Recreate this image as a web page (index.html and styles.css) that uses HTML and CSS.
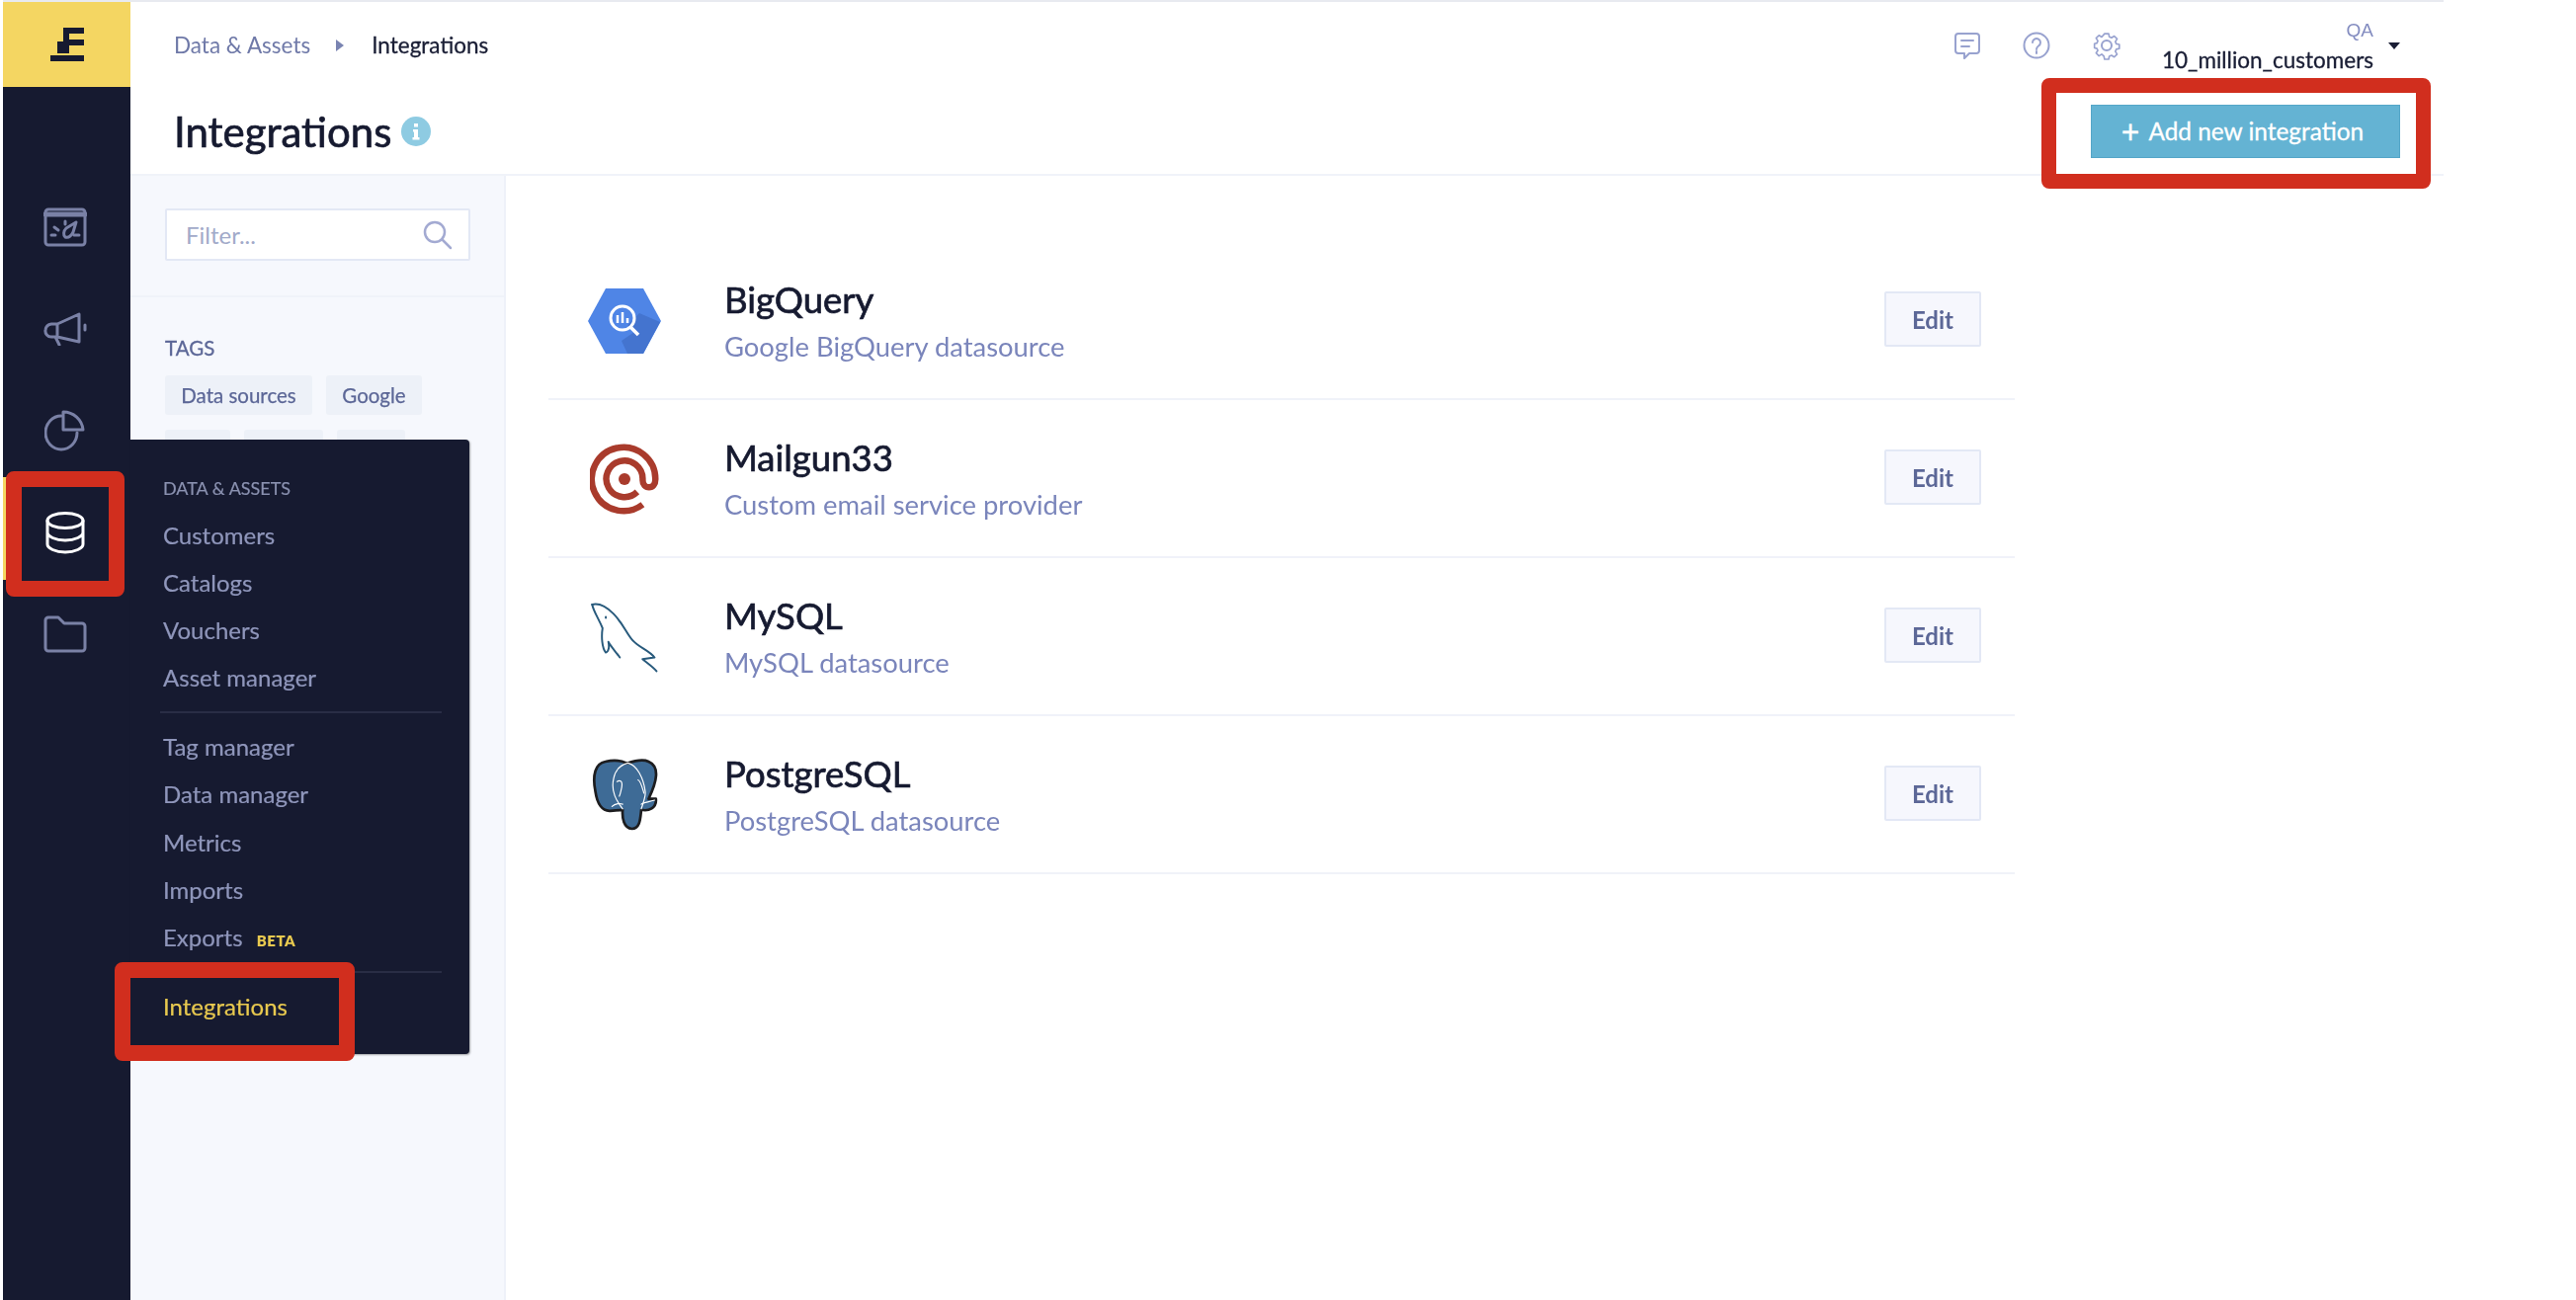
FILE: index.html
```html
<!DOCTYPE html>
<html lang="en">
<head>
<meta charset="utf-8">
<title>Integrations</title>
<link rel="stylesheet" href="styles.css">
</head>
<body>
<div class="shot">
<div class="app">
  <aside class="rail">
    <div class="logo">
      <svg width="34" height="34" viewBox="0 0 34 34"><path class="logo-mark" d="M13 0h21v6H19v6h15v6H19v8h-6v-8H7v8h6zM0 28h34v6H0z" fill-rule="evenodd"/><path class="logo-mark" d="M7 14h6v12H7z"/></svg>
    </div>
    <nav class="rail-nav">
      <a class="rail-item">
        <svg width="44" height="40" viewBox="0 0 44 40" class="ico"><rect x="2" y="2" width="40" height="36" rx="3"/><path d="M2 7h40" stroke-width="5"/><path d="M8 28h4M31 28h5M11 20l4 3M22 14v3M33 15L23 21c-3 3-3 7-1 9 3 1 6-1 8-5z"/></svg>
      </a>
      <a class="rail-item">
        <svg width="44" height="34" viewBox="0 0 44 34" class="ico"><path d="M36 2v28L14 25H8a6 6 0 0 1-6-7 7 7 0 0 1 6-6h6zM14 12v13M12 25l4 8M42 13v5"/></svg>
      </a>
      <a class="rail-item">
        <svg width="42" height="42" viewBox="0 0 42 42" class="ico"><path d="M17 6A16 17 0 1 0 33 23"/><path d="M19 2V20H39A20 20 0 0 0 19 2Z"/></svg>
      </a>
      <a class="rail-item is-active">
        <svg width="42" height="44" viewBox="0 0 42 44" class="ico"><ellipse cx="21" cy="10" rx="18" ry="7.500"/><path d="M3 10v24c0 4 8 8 18 8s18-4 18-8V10M3 22c0 4 8 8 18 8s18-4 18-8"/></svg>
      </a>
      <a class="rail-item">
        <svg width="44" height="38" viewBox="0 0 44 38" class="ico"><path d="M2 5a3 3 0 0 1 3-3h10l6 6h18a3 3 0 0 1 3 3v22a3 3 0 0 1-3 3H5a3 3 0 0 1-3-3z"/></svg>
      </a>
    </nav>
  </aside>

  <main class="main">
    <header class="header">
      <div class="topbar">
        <div class="crumbs">
          <span class="crumb">Data &amp; Assets</span>
          <svg class="crumb-arrow" width="8" height="12" viewBox="0 0 8 12"><path d="M0 0l8 6-8 6z"/></svg>
          <span class="crumb-current">Integrations</span>
        </div>
        <div class="tools">
          <svg class="tool" width="28" height="28" viewBox="0 0 28 28"><path d="M5 2h18a3 3 0 0 1 3 3v14a3 3 0 0 1-3 3h-7l-5 5v-5H5a3 3 0 0 1-3-3V5a3 3 0 0 1 3-3zM8 9h12M8 15h8"/></svg>
          <svg class="tool" width="28" height="28" viewBox="0 0 28 28"><circle cx="14" cy="14" r="12.500"/><path d="M10 11a4 4 0 1 1 6 3.500c-1.500 1-2 1.500-2 3.500M14 20v2"/></svg>
          <svg class="tool" width="30" height="30" viewBox="0 0 30 30"><path d="M12.500 2h5l.8 3.800 2.700 1.100 3.300-2.100 3.500 3.500-2.100 3.300 1.100 2.700 3.700.8v5l-3.700.8-1.100 2.700 2.100 3.300-3.500 3.500-3.300-2.100-2.700 1.100-.8 3.700h-5l-.8-3.700L9 27l-3.300 2.100-3.500-3.500 2.100-3.300L3.200 20l-3-.8v-5l3-.8 1.100-2.700-2.100-3.300 3.500-3.500L9 6z" transform="translate(2.500 1.500) scale(.83)"/><circle cx="15" cy="15" r="5"/></svg>
          <div class="account">
            <span class="account-org">QA</span>
            <span class="account-name">10_million_customers</span>
          </div>
          <svg class="caret" width="12" height="7" viewBox="0 0 12 7"><path d="M0 0h12L6 7z"/></svg>
        </div>
      </div>
      <div class="titlebar">
        <div class="title-group">
          <h1 class="title">Integrations</h1>
          <svg class="info" width="30" height="30" viewBox="0 0 30 30"><circle cx="15" cy="15" r="15" fill="#8ecbe2"/><path d="M13 7h4v3.500h-4zM12 13h5v8h1.500v2.500h-7V21H13v-5.500h-1z" fill="#fff"/></svg>
        </div>
        <button class="btn-add"><span class="plus">+</span>Add new integration</button>
      </div>
    </header>

    <div class="body">
      <section class="panel">
        <div class="filter-wrap">
          <div class="filter">
            <span class="filter-text">Filter...</span>
            <svg class="search" width="30" height="30" viewBox="0 0 30 30"><circle cx="12" cy="12" r="10"/><path d="M19.500 19.500L28 28"/></svg>
          </div>
        </div>
        <div class="tags">
          <div class="tags-label">TAGS</div>
          <div class="tag-list">
            <span class="tag tag-a">Data sources</span>
            <span class="tag tag-b">Google</span>
            <span class="tag tag-c"></span>
            <span class="tag tag-d"></span>
            <span class="tag tag-e"></span>
          </div>
        </div>
      </section>

      <section class="list">
        <article class="row">
          <div class="logo-slot">
          <svg width="76" height="68" viewBox="0 0 76 68">
            <path d="M19 1h38l18 33-18 33H19L1 34z" fill="#4f85e6"/>
            <path d="M48 45l-7-7 12-12 21 9-17 32H41l-6-13z" fill="#4474cf"/>
            <circle cx="36" cy="31" r="12" fill="none" stroke="#fff" stroke-width="3"/>
            <path d="M44 40l8 8" stroke="#fff" stroke-width="3.500"/>
            <path d="M31 28v8M36 25v11M41 31v5" stroke="#fff" stroke-width="2.500"/>
          </svg>
          </div>
          <div class="row-text">
            <div class="row-name">BigQuery</div>
            <div class="row-desc">Google BigQuery datasource</div>
          </div>
          <button class="btn-edit">Edit</button>
        </article>
        <article class="row">
          <div class="logo-slot">
          <svg width="70" height="72" viewBox="0 0 76 78">
            <path d="M58 67a35 35 0 1 1 14-28c0 6-3 9-7 9s-7-3-7-8V39a20 20 0 1 0-6 14" fill="none" stroke="#a93b2c" stroke-width="7"/>
            <circle cx="38" cy="39" r="6.500" fill="#a93b2c"/>
          </svg>
          </div>
          <div class="row-text">
            <div class="row-name">Mailgun33</div>
            <div class="row-desc">Custom email service provider</div>
          </div>
          <button class="btn-edit">Edit</button>
        </article>
        <article class="row">
          <div class="logo-slot">
          <svg width="74" height="74" viewBox="122 105 215 225">
            <g fill="none" stroke="#285a7c" stroke-width="6" stroke-linejoin="round" stroke-linecap="round">
              <path d="M130 117C150 112 175 125 195 145C225 175 235 205 255 228C275 250 305 258 322 280L285 285C300 298 318 310 328 322"/>
              <path d="M130 117C135 140 150 160 162 190C158 215 160 250 172 265C182 262 183 245 180 232C190 250 205 265 215 280"/>
              <path d="M172 155v3"/>
            </g>
          </svg>
          </div>
          <div class="row-text">
            <div class="row-name">MySQL</div>
            <div class="row-desc">MySQL datasource</div>
          </div>
          <button class="btn-edit">Edit</button>
        </article>
        <article class="row">
          <div class="logo-slot logo-slot-pg">
          <svg width="70" height="74" viewBox="125 588 205 220">
            <path d="M170 600C140 605 130 640 140 690C145 725 160 750 185 748L222 745C220 770 225 800 250 802C275 802 275 770 278 745C300 750 325 740 322 712L300 712C325 660 335 615 300 600C280 590 250 600 235 605C215 595 190 595 170 600Z" fill="#3e6b96" stroke="#1d1d1f" stroke-width="8" stroke-linejoin="round"/>
            <g fill="none" stroke="#fff" stroke-width="3.500" stroke-linecap="round">
              <path d="M222 742C205 720 185 690 195 650C200 625 215 610 238 604C265 610 285 650 290 690C292 705 285 720 278 742"/>
              <path d="M190 735C200 725 215 725 222 728M278 728C285 722 300 722 318 716"/>
              <path d="M205 660c10-6 15 0 15 8s-5 30-8 36M268 655c8 2 12 20 18 40"/>
            </g>
          </svg>
          </div>
          <div class="row-text">
            <div class="row-name">PostgreSQL</div>
            <div class="row-desc">PostgreSQL datasource</div>
          </div>
          <button class="btn-edit">Edit</button>
        </article>
      </section>
    </div>
  </main>

  <div class="flyout">
    <div class="fly-head">DATA &amp; ASSETS</div>
    <a class="fly-item">Customers</a>
    <a class="fly-item">Catalogs</a>
    <a class="fly-item">Vouchers</a>
    <a class="fly-item">Asset manager</a>
    <hr class="fly-sep">
    <a class="fly-item">Tag manager</a>
    <a class="fly-item">Data manager</a>
    <a class="fly-item">Metrics</a>
    <a class="fly-item">Imports</a>
    <a class="fly-item">Exports <span class="beta">BETA</span></a>
    <hr class="fly-sep">
    <a class="fly-item fly-current">Integrations</a>
  </div>
</div>

<div class="mark mark-add"></div>
<div class="mark mark-db"></div>
<div class="mark mark-int"></div>
</div>
</body>
</html>
```

FILE: styles.css
```css
* { box-sizing: border-box; }
html, body { margin: 0; padding: 0; background: #fff; }
body { font-family: Lato, "Open Sans", sans-serif; height: 1316px; overflow: hidden; }
.shot { position: relative; height: 1316px; filter: blur(.6px); }

.app { position: relative; display: flex; width: 2470px; height: 1316px; margin-left: 3px; border-top: 2px solid #e8eaf0; }

/* rail */
.rail { width: 129px; flex: none; background: #161a30; }
.logo { height: 86px; background: #f4d662; display: flex; align-items: center; justify-content: center; }
.logo-mark { fill: #161a30; }
.rail-nav { padding-top: 90px; display: flex; flex-direction: column; }
.rail-item { position: relative; height: 103px; display: flex; align-items: center; justify-content: center; padding-right: 3px; }
.ico { fill: none; stroke: #7a81a6; stroke-width: 3; stroke-linecap: round; stroke-linejoin: round; }
.is-active .ico { stroke: #fff; }
.is-active::before { content: ""; position: absolute; left: 0; top: -4px; width: 4px; height: 104px; background: #f4d662; }

/* header */
.main { flex: 1; min-width: 0; display: flex; flex-direction: column; }
.header { height: 176px; border-bottom: 2px solid #f0f3f9; display: flex; flex-direction: column; }
.topbar { height: 88px; display: flex; align-items: center; justify-content: space-between; padding: 0 44px 0 44px; }
.crumbs { display: flex; align-items: center; font-size: 22.500px; margin-top: -1px; }
.crumb { color: #6f79a8; }
.crumb-arrow { margin: 0 28px 0 26px; fill: #7a84b2; }
.crumb-current { color: #1a1e35; -webkit-text-stroke: .3px #1a1e35; }
.tools { display: flex; align-items: center; }
.tool { fill: none; stroke: #98a2cf; stroke-width: 2; stroke-linecap: round; stroke-linejoin: round; margin-right: 42px; }
.tool + .tool + .tool { margin-right: 41px; }
.account { display: flex; flex-direction: column; align-items: flex-end; margin-top: 4px; }
.account-org { font-size: 19px; line-height: 22px; color: #838cc0; margin-bottom: 4px; font-family: "Liberation Sans", sans-serif; }
.account-name { font-size: 22.500px; line-height: 30px; color: #1a1e35; -webkit-text-stroke: .3px #1a1e35; }
.caret { fill: #1a1e35; margin: 0 0 0 15px; }

.titlebar { flex: 1; display: flex; align-items: center; justify-content: space-between; padding: 0 44px 0 44px; }
.title-group { display: flex; align-items: center; }
.title { margin: 0; font-size: 42px; font-weight: 400; color: #161a30; line-height: 50px; -webkit-text-stroke: .7px #161a30; }
.info { margin-left: 10px; }
.btn-add { width: 313px; height: 54px; margin-top: -1px; border: 1px solid #55a6c8; background: #64b3d3; color: #fff; font: 400 24.400px Lato, sans-serif; -webkit-text-stroke: .3px #fff; display: flex; align-items: center; justify-content: center; padding: 0 6px 0 0; }
.plus { font-size: 32px; line-height: 1; margin-right: 9px; }

/* body */
.body { flex: 1; display: flex; min-height: 0; }
.panel { width: 380px; flex: none; background: #f6f8fd; border-right: 2px solid #eef1f9; }
.filter-wrap { height: 123px; padding: 33px 34px 0 35px; border-bottom: 2px solid #f0f3f9; }
.filter { height: 53px; background: #fff; border: 2px solid #e3e8f5; display: flex; align-items: center; justify-content: space-between; padding: 0 16px 0 19px; border-radius: 2px; }
.filter-text { font-size: 24px; color: #a2aac9; }
.search { fill: none; stroke: #a3aad2; stroke-width: 2.500; stroke-linecap: round; }
.tags { padding: 40px 33px 0 35px; }
.tags-label { font-size: 20.500px; line-height: 22px; color: #5c6797; -webkit-text-stroke: .3px #5c6797; margin-bottom: 17px; }
.tag-list { display: flex; flex-wrap: wrap; gap: 15px 14px; }
.tag { height: 40px; padding: 0 16px; background: #edf1f8; color: #5c6797; font-size: 20.500px; line-height: 40px; border-radius: 3px; -webkit-text-stroke: .25px #5c6797; }
.tag-a { width: 149px; padding: 0; text-align: center; }
.tag-b { width: 97px; padding: 0; text-align: center; }
.tag-c { width: 66px; }
.tag-d { width: 80px; }
.tag-e { width: 69px; }

/* list */
.list { flex: 1; padding: 67px 434px 0 43px; }
.row { height: 160px; border-bottom: 2px solid #f0f2f9; display: flex; align-items: center; padding-right: 34px; padding-top: 2px; }
.logo-slot { flex: none; width: 76px; margin-left: 39px; display: flex; justify-content: center; }
.logo-slot-pg { margin-top: -2px; }
.row-text { flex: 1; margin-left: 63px; }
.row-name { font-size: 36.500px; line-height: 42px; color: #161a30; -webkit-text-stroke: .7px #161a30; margin-bottom: 9px; }
.row-desc { font-size: 27.400px; line-height: 36px; color: #7a85bb; }
.btn-edit { width: 98px; height: 56px; margin-bottom: 4px; background: #f6f7fd; border: 2px solid #e3e8f5; border-radius: 2px; color: #5c6797; font: 700 24px Lato, sans-serif; padding: 0; }

/* flyout */
.flyout { position: absolute; left: 129px; top: 443px; width: 343px; height: 622px; background: #161a30; padding: 36px 28px 0 33px; border-radius: 0 4px 4px 0; box-shadow: 1px 1px 2px rgba(0,0,0,.35); }
.fly-head { font-size: 18px; line-height: 26px; color: #8a91b0; -webkit-text-stroke: .2px #8a91b0; margin-bottom: 10.500px; }
.fly-item { display: block; height: 48.200px; font-size: 24px; line-height: 48px; color: #8f96bb; -webkit-text-stroke: .2px #8f96bb; white-space: nowrap; }
.fly-sep { margin: 10px 0 10px -3px; border: 0; border-top: 2px solid #292d45; }
.beta { font-size: 15px; font-weight: 800; color: #e8c94f; -webkit-text-stroke: 0; margin-left: 8px; letter-spacing: .5px; }
.fly-current { color: #e8c94f; -webkit-text-stroke: .2px #e8c94f; }

/* annotations */
.mark { position: absolute; border: 15px solid #d12e1e; border-radius: 8px; }
.mark-add { left: 2066px; top: 79px; width: 394px; height: 112px; }
.mark-db { left: 6px; top: 477px; width: 120px; height: 127px; border-width: 16px; }
.mark-int { left: 116px; top: 974px; width: 243px; height: 100px; border-width: 16px; }
```
